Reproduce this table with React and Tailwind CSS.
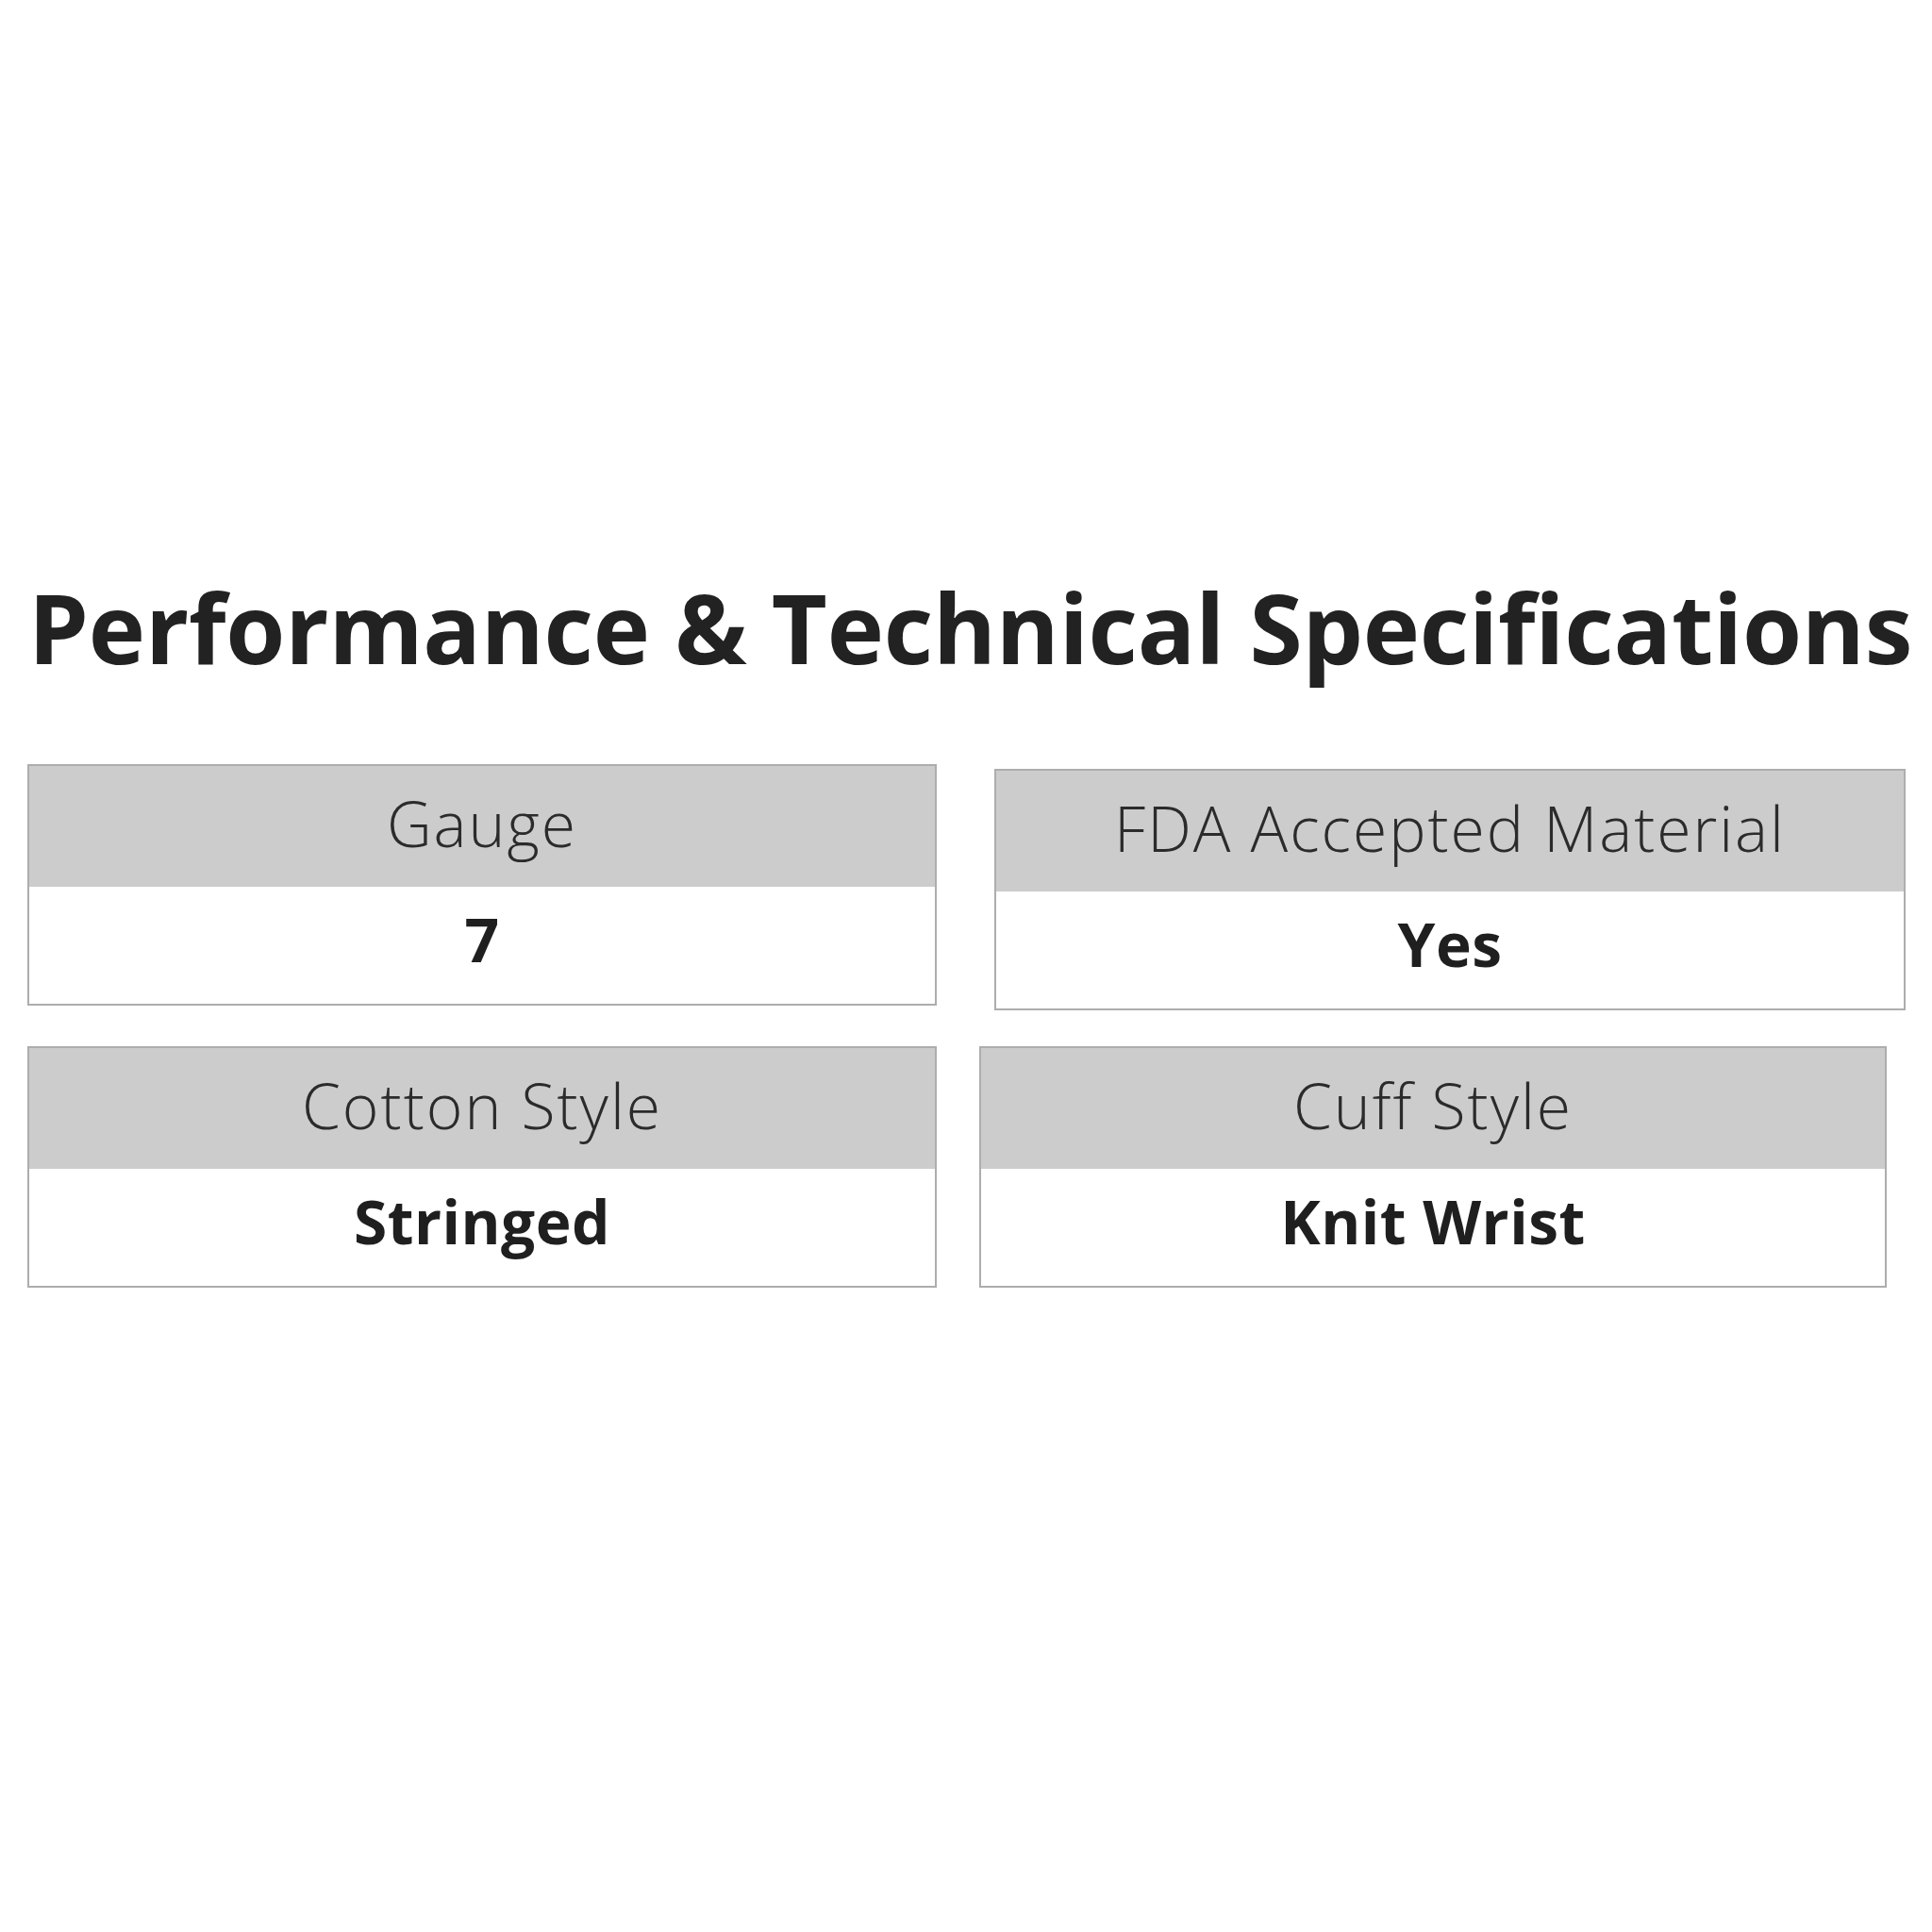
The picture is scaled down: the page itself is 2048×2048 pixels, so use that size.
import React from "react";

function SpecCard({ label, value, className }) {
  return (
    <div className={`flex h-[256px] flex-col border-2 border-[#adadad] bg-white ${className}`}>
      <div className="flex h-[128px] shrink-0 items-center justify-center bg-[#cccccc] pb-[8px]">
        <span className="whitespace-nowrap text-[66px] font-light leading-none tracking-[2px] text-[#2b2b2b]">
          {label}
        </span>
      </div>
      <div className="flex flex-1 items-center justify-center pb-[12px]">
        <span className="whitespace-nowrap text-[64px] font-bold leading-none tracking-[0.5px] text-[#1f1f1f]">
          {value}
        </span>
      </div>
    </div>
  );
}

export default function App() {
  return (
    <div className="flex h-[2048px] w-[2048px] flex-col bg-white pt-[614px] font-['Open_Sans',sans-serif]">
      <h1 className="whitespace-nowrap pl-[30px] text-[102px] font-bold leading-none tracking-[-0.2px] text-[#222222]">
        Performance &amp; Technical Specifications
      </h1>
      <div className="mt-[94px] flex items-start pl-[29px]">
        <SpecCard label="Gauge" value="7" className="w-[964px]" />
        <SpecCard label="FDA Accepted Material" value="Yes" className="ml-[61px] mt-[5px] w-[966px]" />
      </div>
      <div className="mt-[38px] flex items-start pl-[29px]">
        <SpecCard label="Cotton Style" value="Stringed" className="w-[964px]" />
        <SpecCard label="Cuff Style" value="Knit Wrist" className="ml-[45px] w-[962px]" />
      </div>
    </div>
  );
}
